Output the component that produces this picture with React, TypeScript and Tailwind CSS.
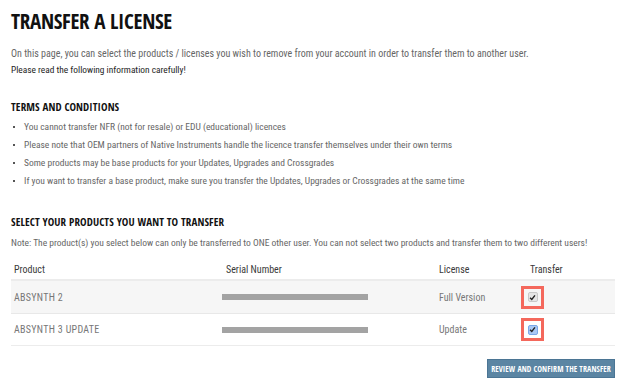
const head = { fontFamily: '"Open Sans Condensed", "Roboto Condensed", "DejaVu Sans Condensed", sans-serif' };
const body = { fontFamily: '"Roboto Condensed", "DejaVu Sans Condensed", "Liberation Sans", sans-serif' };

function Check({ blue }: { blue?: boolean }) {
  return (
    <div className="flex h-[23px] w-[23px] items-center justify-center border-[3px] border-[#f4685c]">
      <div
        className={
          blue
            ? 'flex h-[10px] w-[10px] items-center justify-center rounded-[2px] border border-[#7aa7e8] bg-[#a9c8f5]'
            : 'flex h-[10px] w-[10px] items-center justify-center rounded-[2px] border border-[#c9c9c9] bg-[#e6e6e6]'
        }
      >
        <svg width="7" height="7" viewBox="0 0 8 8">
          <path d="M1.2 4.2 L3.2 6.2 L6.8 1.6" fill="none" stroke="#222" strokeWidth="1.6" />
        </svg>
      </div>
    </div>
  );
}

const bullets = [
  'You cannot transfer NFR (not for resale) or EDU (educational) licences',
  'Please note that OEM partners of Native Instruments handle the licence transfer themselves under their own terms',
  'Some products may be base products for your Updates, Upgrades and Crossgrades',
  'If you want to transfer a base product, make sure you transfer the Updates, Upgrades or Crossgrades at the same time',
];

export default function App() {
  return (
    <div className="min-h-[389px] w-[630px] bg-white pl-[11px] pr-[15px]" style={body}>
      <h1 className="pt-[9px] text-[21px] font-bold leading-[24px] tracking-[-0.3px] text-[#111]" style={head}>
        TRANSFER A LICENSE
      </h1>
      <div className="mt-[13px] text-[10px] leading-[16px]">
        <p className="whitespace-nowrap text-[#666]">
          On this page, you can select the products / licenses you wish to remove from your account in order to transfer them to another user.
        </p>
        <p className="text-[9.4px] text-[#1e1e1e]">Please read the following information carefully!</p>
      </div>
      <h2 className="mt-[21px] text-[11px] font-bold leading-[16px] tracking-[0.1px] text-[#111]" style={head}>
        TERMS AND CONDITIONS
      </h2>
      <ul className="mt-[3px] text-[9.5px] leading-[18px] text-[#666]">
        {bullets.map((b) => (
          <li key={b} className="flex items-center whitespace-nowrap">
            <span className="ml-[2px] mr-[9px] h-[2px] w-[2px] bg-[#555]" />
            <span>{b}</span>
          </li>
        ))}
      </ul>
      <h2 className="mt-[24px] text-[11px] font-bold leading-[16px] tracking-[0.1px] text-[#111]" style={head}>
        SELECT YOUR PRODUCTS YOU WANT TO TRANSFER
      </h2>
      <p className="mt-[5px] whitespace-nowrap text-[9.5px] leading-[16px] text-[#666]">
        Note: The product(s) you select below can only be transferred to ONE other user. You can not select two products and transfer them to two different users!
      </p>
      <div className="mt-[8px] text-[10px]">
        <div className="grid h-[22px] grid-cols-[211px_212px_86px_95px] items-center border-b-2 border-[#ececec] text-[#3a3a3a]">
          <div className="pl-[3px]">Product</div>
          <div className="pl-[4px]">Serial Number</div>
          <div className="pl-[5px]">License</div>
          <div className="pl-[10px]">Transfer</div>
        </div>
        <div className="grid h-[33px] grid-cols-[211px_212px_86px_95px] items-center border-b border-[#e8e8e8] bg-[#f6f6f6] text-[#777]">
          <div className="pl-[3px] tracking-[0.3px]">ABSYNTH 2</div>
          <div>
            <div className="h-[6px] w-[146px] bg-[#a3a3a3]" />
          </div>
          <div className="pl-[5px]">Full Version</div>
          <div className="pl-[1px]">
            <Check />
          </div>
        </div>
        <div className="grid h-[32px] grid-cols-[211px_212px_86px_95px] items-center border-b border-[#ececec] text-[#777]">
          <div className="pl-[3px] tracking-[0.3px]">ABSYNTH 3 UPDATE</div>
          <div>
            <div className="h-[6px] w-[146px] bg-[#a3a3a3]" />
          </div>
          <div className="pl-[5px]">Update</div>
          <div className="pl-[1px]">
            <Check blue />
          </div>
        </div>
      </div>
      <div className="mt-[13px] flex justify-end">
        <button
          className="h-[19px] w-[128px] border border-[#4b7594] bg-[#5b85a3] text-[8px] font-bold leading-[17px] tracking-[0.1px] text-white"
          style={head}
        >
          REVIEW AND CONFIRM THE TRANSFER
        </button>
      </div>
    </div>
  );
}
